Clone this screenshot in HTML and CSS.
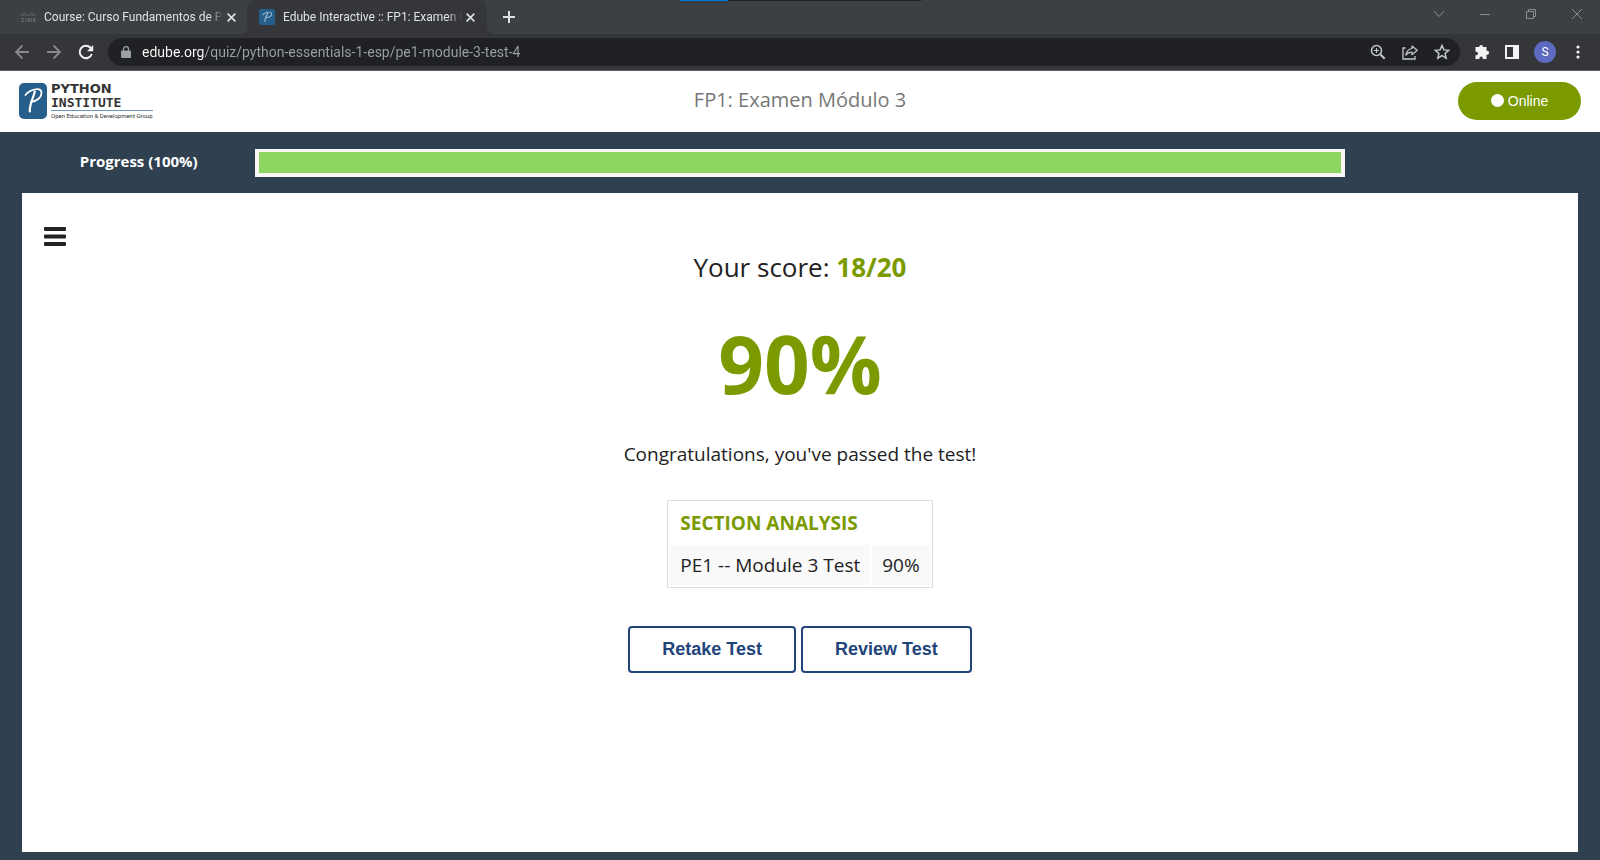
FILE: index.html
```html
<!DOCTYPE html>
<html lang="es">
<head>
<meta charset="utf-8">
<meta name="viewport" content="width=device-width, initial-scale=1">
<title>Edube Interactive :: FP1: Examen Módulo 3</title>
<link rel="stylesheet" href="styles.css">
</head>
<body>
<div class="browser">
  <div class="share-strip"></div>
  <div class="tabs">
    <div class="tab">
      <svg class="favicon" viewBox="0 0 16 16" aria-hidden="true"><path d="M1 5v2M3 3.500V7M5 3.500V7M7 5v2M9 5v2M11 3.500V7M13 3.500V7M15 5v2" stroke="#5d6165" stroke-width="1"/><path d="M4 9.500H2v3h2M6 9v4M9.500 9.500H8v1.500h1.500v1.500H8M12 9.500h-1v3h1M13.500 9.500h1.500v3h-1.500z" fill="none" stroke="#686c70"/></svg>
      <span class="tab-title">Course: Curso Fundamentos de P</span>
      <button class="icon-button tab-close" aria-label="Close tab"><svg viewBox="0 0 10 10"><path d="M1.500 1.500l7 7M8.500 1.500l-7 7" stroke="#dee1e6" stroke-width="1.500"/></svg></button>
    </div>
    <div class="tab tab-active">
      <svg class="favicon" viewBox="0 0 28 36" preserveAspectRatio="none" aria-hidden="true"><rect width="28" height="36" rx="4" fill="#265e8c"/><path d="M7 13C10 7 21 5 22 10C23 16 17 20 12 19M15 9C13 15 11 21 10 28" fill="none" stroke="#9dbad2" stroke-width="2" stroke-linecap="round"/></svg>
      <span class="tab-title">Edube Interactive :: FP1: Examen M</span>
      <button class="icon-button tab-close" aria-label="Close tab"><svg viewBox="0 0 10 10"><path d="M1.500 1.500l7 7M8.500 1.500l-7 7" stroke="#dee1e6" stroke-width="1.500"/></svg></button>
    </div>
    <button class="icon-button new-tab" aria-label="New tab"><svg viewBox="0 0 12 12"><path d="M6 0v12M0 6h12" stroke="#dee1e6" stroke-width="2"/></svg></button>
    <div class="window-controls">
      <button class="icon-button" aria-label="Search tabs"><svg viewBox="0 0 12 12"><path d="M1 3l5 5.500L11 3" fill="none" stroke="#8a8c8e"/></svg></button>
      <button class="icon-button" aria-label="Minimize"><svg viewBox="0 0 12 12"><path d="M1 6.500h10" stroke="#8a8c8e"/></svg></button>
      <button class="icon-button" aria-label="Restore"><svg viewBox="0 0 12 12"><path d="M1.500 3.500h7v7h-7zM3.500 3.500v-2h7v7h-2" fill="none" stroke="#8a8c8e"/></svg></button>
      <button class="icon-button" aria-label="Close"><svg viewBox="0 0 12 12"><path d="M1 1l10 10M11 1L1 11" stroke="#8a8c8e"/></svg></button>
    </div>
  </div>
  <div class="toolbar">
    <div class="nav-buttons">
      <button class="icon-button" aria-label="Back"><svg viewBox="0 0 16 16"><path d="M15 8H2M8.500 1.500L2 8l6.500 6.500" fill="none" stroke="#87898c" stroke-width="1.800"/></svg></button>
      <button class="icon-button" aria-label="Forward"><svg viewBox="0 0 16 16"><path d="M1 8h13M7.500 1.500L14 8l-6.500 6.500" fill="none" stroke="#87898c" stroke-width="1.800"/></svg></button>
      <button class="icon-button" aria-label="Reload"><svg viewBox="0 0 16 16"><path d="M13.800 10A6.200 6.200 0 1 1 12.500 3.700L14 5.200" fill="none" stroke="#f1f3f4" stroke-width="2"/><path d="M15.200 1v6.200H9z" fill="#f1f3f4"/></svg></button>
    </div>
    <div class="omnibox">
      <svg class="lock" viewBox="0 0 10 12" aria-hidden="true"><path d="M1 4.500h8q1 0 1 1V11q0 1-1 1H1q-1 0-1-1V5.500q0-1 1-1z" fill="#9aa0a6"/><path d="M2.500 5V3a2.500 2.300 0 0 1 5 0v2" fill="none" stroke="#9aa0a6" stroke-width="1.300"/></svg>
      <input class="address" type="text" aria-label="Address" value="edube.org/quiz/python-essentials-1-esp/pe1-module-3-test-4">
      <button class="icon-button" aria-label="Zoom"><svg viewBox="0 0 16 16"><circle cx="6.500" cy="6.500" r="5" fill="none" stroke="#c4c7ca" stroke-width="1.500"/><path d="M10.200 10.200l4.500 4.500" stroke="#c4c7ca" stroke-width="2"/><path d="M6.500 4v5M4 6.500h5" stroke="#c4c7ca" stroke-width="1.200"/></svg></button>
      <button class="icon-button" aria-label="Share"><svg viewBox="0 0 16 16"><path d="M3.500 4H1v11h12v-3" fill="none" stroke="#c4c7ca" stroke-width="1.300"/><path d="M10 2l5.200 4.300L10 10.700V8.200C7 8.200 5.200 9.200 3.800 11.200C4.300 7.700 6.300 5 10 4.500z" fill="none" stroke="#c4c7ca" stroke-width="1.200" stroke-linejoin="round"/></svg></button>
      <button class="icon-button" aria-label="Bookmark"><svg viewBox="0 0 16 16"><path d="M8 1.500l1.900 4.400 4.800.4-3.600 3.100 1.100 4.700L8 11.600l-4.200 2.500 1.100-4.700L1.300 6.300l4.800-.4z" fill="none" stroke="#c4c7ca" stroke-width="1.500"/></svg></button>
    </div>
    <div class="extensions">
      <button class="icon-button" aria-label="Extensions"><svg viewBox="0 0 16 16"><path d="M5.200 3a1.900 1.900 0 0 1 3.800 0h3.500v3.700h.6a2 2 0 0 1 0 4h-.6V15H8.800v-.8a1.700 1.700 0 0 0-3.400 0v.8H1.500v-3.800h.8a1.700 1.700 0 0 0 0-3.400H1.500V3z" fill="#f1f3f4"/></svg></button>
      <button class="icon-button" aria-label="Side panel"><svg viewBox="0 0 16 16"><path d="M1 1h14v14H1zM3 3v10h6V3z" fill="#f1f3f4" fill-rule="evenodd"/></svg></button>
      <button class="avatar" aria-label="Profile">S</button>
      <button class="icon-button" aria-label="Menu"><svg viewBox="0 0 16 16"><g fill="#f1f3f4"><circle cx="8" cy="3" r="1.600"/><circle cx="8" cy="8" r="1.600"/><circle cx="8" cy="13" r="1.600"/></g></svg></button>
    </div>
  </div>
</div>

<header class="header">
  <a class="logo" href="#">
    <svg class="logo-mark" viewBox="0 0 28 36" aria-hidden="true"><rect width="28" height="36" rx="5" fill="#265e8c"/><path d="M6.500 12C10 7 21 4 22.300 8.500C23.500 14 17 19 12 18.800" fill="none" stroke="#fff" stroke-width="1.800" stroke-linecap="round"/><path d="M15.800 8.500C14.500 15 10.500 20 10.800 28.500" fill="none" stroke="#fff" stroke-width="2.200" stroke-linecap="round"/></svg>
    <span class="logo-text">
      <span class="logo-line">PYTHON</span>
      <span class="logo-line logo-line-slab">INSTITUTE</span>
      <span class="logo-tagline">Open Education &amp; Development Group</span>
    </span>
  </a>
  <h1 class="title">FP1: Examen Módulo 3</h1>
  <button class="status"><span class="status-dot"></span>Online</button>
</header>

<main class="main">
  <div class="progress-row">
    <label class="progress-label" for="progress">Progress (100%)</label>
    <progress class="progress" id="progress" max="100" value="100"></progress>
  </div>
  <section class="panel">
    <button class="icon-button menu" aria-label="Menu"><svg viewBox="0 0 22 19"><g fill="#222"><rect width="22" height="4" rx="1"/><rect y="7.500" width="22" height="4" rx="1"/><rect y="15" width="22" height="4" rx="1"/></g></svg></button>
    <div class="result">
      <p class="score">Your score: <strong class="green">18/20</strong></p>
      <p class="percent green">90%</p>
      <p class="message">Congratulations, you've passed the test!</p>
      <table class="analysis">
        <thead><tr><th class="green" colspan="2">SECTION ANALYSIS</th></tr></thead>
        <tbody><tr><td>PE1 -- Module 3 Test</td><td>90%</td></tr></tbody>
      </table>
      <div class="actions">
        <button class="action">Retake Test</button>
        <button class="action">Review Test</button>
      </div>
    </div>
  </section>
</main>
</body>
</html>
```

FILE: styles.css
```css
* { box-sizing: border-box; }

body {
  margin: 0;
  min-height: 100vh;
  display: flex;
  flex-direction: column;
  font-family: "Open Sans", sans-serif;
  color: #222;
  background: #2f4050;
}

button { font-family: inherit; cursor: pointer; }

.icon-button {
  display: flex;
  align-items: center;
  justify-content: center;
  padding: 0;
  border: 0;
  background: none;
}

.icon-button svg { width: 16px; height: 16px; }

/* Browser window */
.browser {
  position: relative;
  background: #35363a;
  border-bottom: 1px solid #5e5c64;
}

.share-strip {
  position: absolute;
  top: 0;
  left: 50%;
  width: 241px;
  height: 1px;
  margin-left: -120px;
  background: linear-gradient(to right, #0078d7 20%, #202020 20%);
}

.tabs {
  display: flex;
  align-items: stretch;
  height: 34px;
  background: #3c4043;
}

.tab {
  display: flex;
  align-items: center;
  width: 247px;
  padding: 0 10px 0 20px;
}

.tab-active {
  position: relative;
  width: 240px;
  padding-left: 12px;
  padding-right: 11px;
  border-radius: 8px 8px 0 0;
  background: #35363a;
}

.tab-active::before,
.tab-active::after {
  content: "";
  position: absolute;
  bottom: 0;
  width: 8px;
  height: 8px;
}

.tab-active::before {
  right: 100%;
  background: radial-gradient(circle at 0 0, #3c4043 8px, #35363a 8px);
}

.tab-active::after {
  left: 100%;
  background: radial-gradient(circle at 100% 0, #3c4043 8px, #35363a 8px);
}

.favicon { flex: none; width: 16px; height: 16px; margin-right: 8px; }

.tab-title {
  flex: 1;
  overflow: hidden;
  white-space: nowrap;
  font-family: Roboto, sans-serif;
  font-size: 12px;
  line-height: 16px;
  color: #dee1e6;
  mask-image: linear-gradient(to left, transparent, #000 14px);
}

.tab-close { width: 12px; margin-left: 2px; }
.tab-close svg { width: 11px; height: 11px; }
.new-tab { width: 44px; }
.new-tab svg { width: 12px; height: 12px; }

.window-controls {
  display: flex;
  align-items: center;
  gap: 34px;
  margin-left: auto;
  padding: 0 17px 6px 0;
}

.window-controls svg { width: 12px; height: 12px; }

.toolbar {
  display: flex;
  align-items: center;
  height: 36px;
  padding: 0 14px;
}

.nav-buttons { display: flex; gap: 16px; width: 94px; }

.omnibox {
  flex: 1;
  display: flex;
  align-items: center;
  gap: 16px;
  height: 28px;
  padding: 0 10px 0 13px;
  border-radius: 14px;
  background: #202124;
}

.lock { width: 10px; height: 12px; }

.address {
  flex: 1;
  min-width: 0;
  margin-left: -5px;
  padding: 0;
  border: 0;
  outline: 0;
  font-family: Roboto, sans-serif;
  font-size: 14px;
  line-height: 20px;
  color: transparent;
  background: linear-gradient(to right, #fff 62px, #9aa0a6 62px);
  background-clip: text;
}

.extensions {
  display: flex;
  align-items: center;
  gap: 14px;
  padding-left: 14px;
}

.avatar {
  width: 22px;
  height: 22px;
  padding: 0;
  border: 0;
  border-radius: 50%;
  font-family: Roboto, sans-serif;
  font-size: 12px;
  line-height: 22px;
  color: #fff;
  background: #5c6bc0;
}

/* Page header */
.header {
  display: grid;
  grid-template-columns: 1fr auto 1fr;
  align-items: center;
  height: 61px;
  padding: 0 19px 2px;
  background: #fff;
}

.logo {
  display: flex;
  align-items: center;
  gap: 4px;
  color: #333;
  text-decoration: none;
}

.logo-mark { width: 28px; height: 36px; }
.logo-text { display: flex; flex-direction: column; }

.logo-line {
  font: bold 13px/14px "DejaVu Sans", sans-serif;
}

.logo-line-slab { font-family: "DejaVu Sans Mono", monospace; }

.logo-tagline {
  border-top: 1px solid #6c96bd;
  font-family: Roboto, sans-serif;
  font-size: 6px;
  line-height: 9px;
}

.title {
  margin: 0;
  padding-bottom: 2px;
  font-size: 20px;
  line-height: 28px;
  font-weight: 400;
  color: #777;
}

.status {
  display: flex;
  align-items: center;
  justify-content: center;
  justify-self: end;
  gap: 4px;
  width: 123px;
  height: 38px;
  border: 0;
  border-radius: 19px;
  font: 14px/20px "Liberation Sans", Arial, sans-serif;
  color: #fff;
  background: #7b9a00;
}

.status-dot { width: 13px; height: 13px; border-radius: 50%; background: #fff; }

/* Quiz result */
.main {
  flex: 1;
  display: flex;
  flex-direction: column;
  padding: 17px 22px 8px;
}

.progress-row {
  display: grid;
  grid-template-columns: 15% 70% 15%;
  align-items: center;
  margin-bottom: 16px;
}

.progress-label {
  padding-bottom: 4px;
  text-align: center;
  font-size: 15px;
  line-height: 20px;
  font-weight: 700;
  color: #fff;
}

.progress {
  appearance: none;
  width: 100%;
  height: 28px;
  border: solid #f7f7f7;
  border-width: 3px 4px 4px;
}

.progress::-webkit-progress-bar { background: #f7f7f7; }
.progress::-webkit-progress-value { background: #8dd55f; }

.panel {
  flex: 1;
  padding: 34px 22px;
  background: #fff;
}

.menu svg { width: 22px; height: 19px; }

.result {
  display: flex;
  flex-direction: column;
  align-items: center;
}

.score,
.percent,
.message { margin: 0; }

.green { color: #7b9a00; }
.score { font-size: 26px; line-height: 42px; }
.percent { padding: 20px 0; font-size: 80px; line-height: 110px; font-weight: 700; }
.message { font-size: 19px; line-height: 32px; }

.analysis {
  margin-top: 30px;
  border: 1px solid #ddd;
  border-spacing: 2px;
  font-size: 19px;
  line-height: 26px;
}

.analysis th,
.analysis td { padding: 7px 10px; text-align: left; }
.analysis td { background: #f9f9f9; }

.actions { display: flex; gap: 5px; margin-top: 38px; }

.action {
  padding: 11px 32px;
  border: 2px solid #21447a;
  border-radius: 4px;
  font: bold 18px/21px "Liberation Sans", Arial, sans-serif;
  color: #21447a;
  background: #fff;
}
```
